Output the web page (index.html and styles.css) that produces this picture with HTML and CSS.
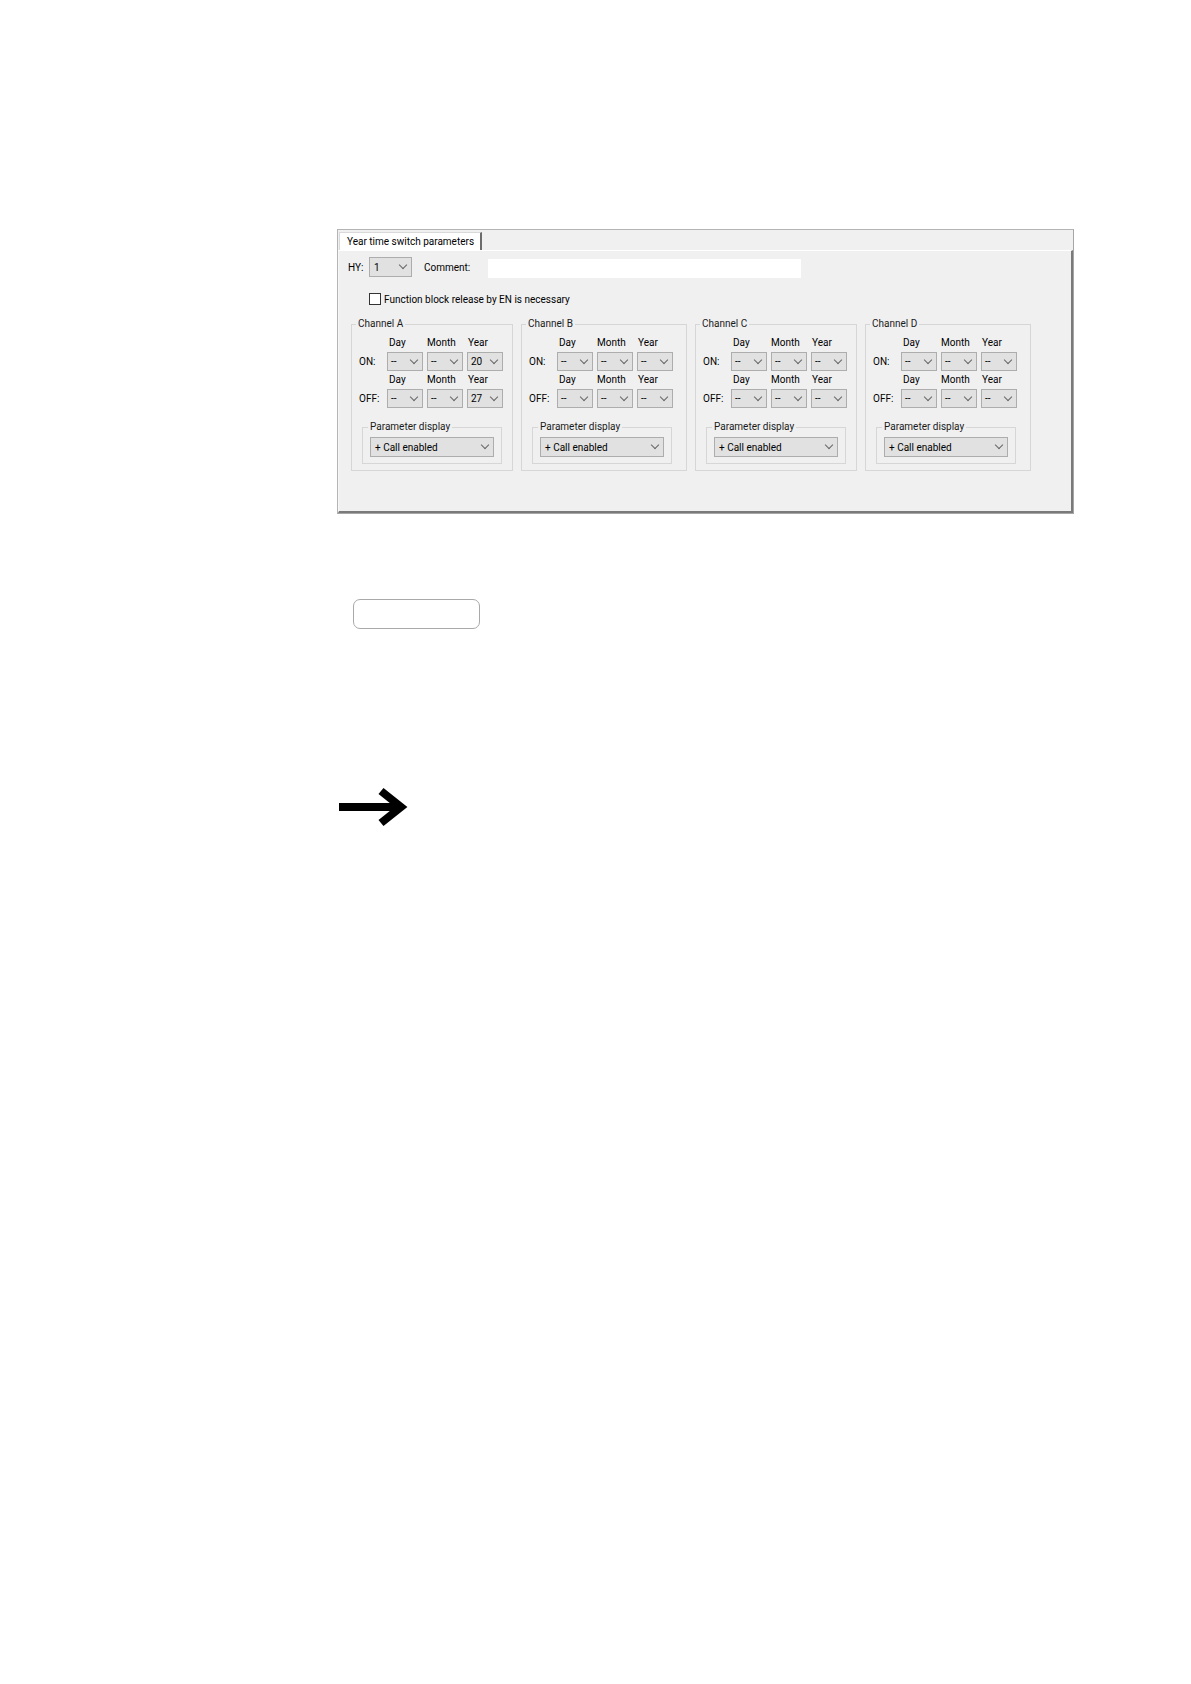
FILE: index.html
```html
<!DOCTYPE html>
<html lang="en">
<head>
<meta charset="utf-8">
<title>Year time switch parameters</title>
<link rel="stylesheet" href="styles.css">
</head>
<body>
<div class="doc">
  <div class="panel">
    <div class="tabstrip"><div class="tab">Year time switch parameters</div></div>
    <div class="page">
      <div class="row-hy">
        <span class="lbl-hy">HY:</span>
        <div class="sel sel-hy"><span>1</span></div>
        <span class="lbl-comment">Comment:</span>
        <div class="input-comment"></div>
      </div>
      <div class="chk-row"><span class="chk"></span><span class="chk-label">Function block release by EN is necessary</span></div>
      <div class="channels">
        <fieldset class="channel narrow">
          <legend>Channel A</legend>
          <div class="grid">
            <span></span><span class="h h1">Day</span><span class="h">Month</span><span class="h h3">Year</span>
            <span class="lab">ON:</span><div class="sel"><span>--</span></div><div class="sel"><span>--</span></div><div class="sel"><span>20</span></div>
            <span></span><span class="h h1">Day</span><span class="h">Month</span><span class="h h3">Year</span>
            <span class="lab">OFF:</span><div class="sel"><span>--</span></div><div class="sel"><span>--</span></div><div class="sel"><span>27</span></div>
          </div>
          <fieldset class="param"><legend>Parameter display</legend><div class="sel sel-wide"><span>+ Call enabled</span></div></fieldset>
        </fieldset>
        <fieldset class="channel wide">
          <legend>Channel B</legend>
          <div class="grid">
            <span></span><span class="h h1">Day</span><span class="h">Month</span><span class="h h3">Year</span>
            <span class="lab">ON:</span><div class="sel"><span>--</span></div><div class="sel"><span>--</span></div><div class="sel"><span>--</span></div>
            <span></span><span class="h h1">Day</span><span class="h">Month</span><span class="h h3">Year</span>
            <span class="lab">OFF:</span><div class="sel"><span>--</span></div><div class="sel"><span>--</span></div><div class="sel"><span>--</span></div>
          </div>
          <fieldset class="param"><legend>Parameter display</legend><div class="sel sel-wide"><span>+ Call enabled</span></div></fieldset>
        </fieldset>
        <fieldset class="channel narrow">
          <legend>Channel C</legend>
          <div class="grid">
            <span></span><span class="h h1">Day</span><span class="h">Month</span><span class="h h3">Year</span>
            <span class="lab">ON:</span><div class="sel"><span>--</span></div><div class="sel"><span>--</span></div><div class="sel"><span>--</span></div>
            <span></span><span class="h h1">Day</span><span class="h">Month</span><span class="h h3">Year</span>
            <span class="lab">OFF:</span><div class="sel"><span>--</span></div><div class="sel"><span>--</span></div><div class="sel"><span>--</span></div>
          </div>
          <fieldset class="param"><legend>Parameter display</legend><div class="sel sel-wide"><span>+ Call enabled</span></div></fieldset>
        </fieldset>
        <fieldset class="channel wide">
          <legend>Channel D</legend>
          <div class="grid">
            <span></span><span class="h h1">Day</span><span class="h">Month</span><span class="h h3">Year</span>
            <span class="lab">ON:</span><div class="sel"><span>--</span></div><div class="sel"><span>--</span></div><div class="sel"><span>--</span></div>
            <span></span><span class="h h1">Day</span><span class="h">Month</span><span class="h h3">Year</span>
            <span class="lab">OFF:</span><div class="sel"><span>--</span></div><div class="sel"><span>--</span></div><div class="sel"><span>--</span></div>
          </div>
          <fieldset class="param"><legend>Parameter display</legend><div class="sel sel-wide"><span>+ Call enabled</span></div></fieldset>
        </fieldset>
      </div>
    </div>
  </div>
  <div class="btn"></div>
  <svg class="arrow" width="70" height="44" viewBox="0 0 70 44">
    <line x1="0" y1="21" x2="63" y2="21" stroke="#000" stroke-width="8"/>
    <polyline points="42,5 62,21 42,37" fill="none" stroke="#000" stroke-width="8" stroke-linejoin="miter" stroke-miterlimit="10"/>
  </svg>
</div>
</body>
</html>
```
FILE: styles.css
```css
html, body {
  margin: 0;
  padding: 0;
  background: #ffffff;
}
body {
  font-family: Roboto, "Noto Sans", sans-serif;
  font-size: 10px;
  color: #000;
}
.doc {
  padding: 229px 0 0 337px;
}
.panel {
  width: 737px;
  height: 285px;
  box-sizing: border-box;
  border: 1px solid #b4b4b4;
  border-right-color: #a6a6a6;
  border-bottom-color: #a6a6a6;
  background: #f0f0f0;
  display: flex;
  flex-direction: column;
}
.tabstrip {
  height: 20px;
  display: flex;
  align-items: flex-end;
}
.tab {
  margin-left: 1px;
  width: 143px;
  height: 18px;
  box-sizing: border-box;
  background: #ffffff;
  border-top: 1px solid #d9d9d9;
  border-left: 1px solid #d9d9d9;
  border-right: 2px solid #6c6c6c;
  padding-left: 7px;
  line-height: 18px;
  white-space: nowrap;
  overflow: hidden;
}
.page {
  flex: 1;
  box-sizing: border-box;
  border-top: 1px solid #ffffff;
  border-left: 1px solid #f8f8f8;
  border-right: 2px solid #7a7a7a;
  border-bottom: 2px solid #7a7a7a;
  padding: 6px 0 0 9px;
}
.row-hy {
  display: flex;
  align-items: center;
  height: 20px;
}
.lbl-hy {
  width: 21px;
}
.sel {
  box-sizing: border-box;
  height: 19px;
  border: 1px solid #adadad;
  background: #e1e1e1;
  display: flex;
  align-items: center;
  justify-content: space-between;
  padding: 0 5px 0 3px;
  white-space: nowrap;
}
.sel::after {
  content: "";
  width: 5px;
  height: 5px;
  border-right: 1px solid #666;
  border-bottom: 1px solid #666;
  transform: translateY(-2px) rotate(45deg);
  flex: none;
}
.sel-hy {
  width: 43px;
  height: 20px;
  padding-left: 4px;
}
.lbl-comment {
  margin-left: 12px;
  width: 64px;
}
.input-comment {
  align-self: flex-start;
  margin-top: 2px;
  width: 313px;
  height: 19px;
  background: #ffffff;
}
.chk-row {
  display: flex;
  align-items: center;
  margin-top: 16px;
  padding-left: 21px;
  height: 12px;
}
.chk {
  width: 12px;
  height: 12px;
  box-sizing: border-box;
  border: 1px solid #333;
  background: #fff;
}
.chk-label {
  margin-left: 3px;
}
.channels {
  display: flex;
  gap: 8px;
  margin-top: 13px;
  margin-left: 3px;
}
fieldset {
  margin: 0;
  min-width: 0;
  box-sizing: border-box;
  border: 1px solid #d6d6d6;
}
legend {
  line-height: 12px;
  padding: 0 2px;
  color: #1a1a1a;
}
.channel {
  padding: 4px 7px 6px 7px;
}
.channel > legend {
  margin-left: -3px;
}
.narrow { width: 162px; }
.wide { width: 166px; }
.grid {
  display: grid;
  grid-template-columns: 24px 36px 36px 36px;
  grid-template-rows: 18px 19px 18px 19px;
  column-gap: 4px;
  align-items: center;
}
.h {
  line-height: 18px;
  white-space: nowrap;
}
.h1 { padding-left: 2px; }
.h3 { padding-left: 1px; }
.lab {
  white-space: nowrap;
}
.param {
  margin-top: 13px;
  margin-left: 3px;
  width: 140px;
  padding: 4px 7px 6px 7px;
}
.param > legend {
  margin-left: -2px;
}
.sel-wide {
  width: 124px;
  height: 20px;
  padding-left: 4px;
  padding-right: 5px;
}
.btn {
  margin: 85px 0 0 16px;
  width: 127px;
  height: 30px;
  box-sizing: border-box;
  border: 1.5px solid #a9a9a9;
  border-radius: 7px;
  background: #fff;
}
.arrow {
  display: block;
  margin: 157px 0 0 2px;
}
```
